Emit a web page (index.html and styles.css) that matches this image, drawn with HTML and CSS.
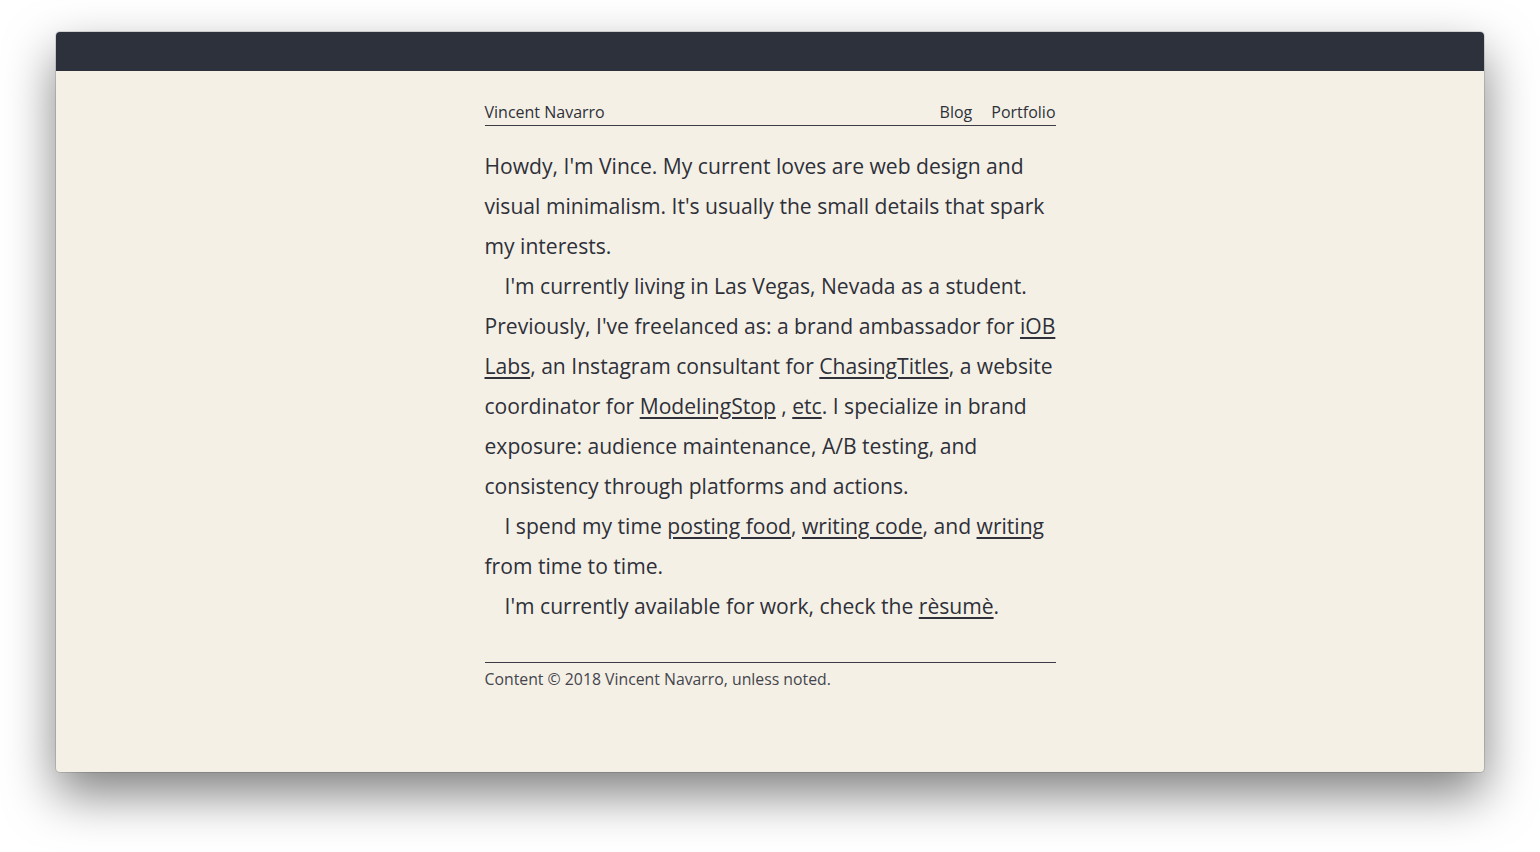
FILE: index.html
```html
<!DOCTYPE html>
<html>
<head>
<meta charset="utf-8">
<link rel="stylesheet" href="styles.css">
</head>
<body>
<div class="window">
  <div class="titlebar"></div>
  <div class="page">
    <div class="column">
      <header class="site-header">
        <a class="brand" href="#">Vincent Navarro</a>
        <nav class="nav">
          <a href="#">Blog</a>
          <a href="#">Portfolio</a>
        </nav>
      </header>
      <main class="content">
        <p class="lead">Howdy, I'm Vince. My current loves are web design and visual minimalism. It's usually the small details that spark my interests.</p>
        <p>I'm currently living in Las Vegas, Nevada as a student. Previously, I've freelanced as: a brand ambassador for <a href="#">iOB Labs</a>, an Instagram consultant for <a href="#">ChasingTitles</a>, a website coordinator for <a href="#">ModelingStop</a> , <a href="#">etc</a>. I specialize in brand exposure: audience maintenance, A/B testing, and consistency through platforms and actions.</p>
        <p>I spend my time <a href="#">posting food</a>, <a href="#">writing code</a>, and <a href="#">writing</a> from time to time.</p>
        <p>I'm currently available for work, check the <a href="#">rèsumè</a>.</p>
      </main>
      <footer class="site-footer">Content © 2018 Vincent Navarro, unless noted.</footer>
    </div>
  </div>
</div>
</body>
</html>
```
FILE: styles.css
```css
html, body {
  margin: 0;
  padding: 0;
}
body {
  background: #ffffff;
  height: 852px;
  box-sizing: border-box;
  padding: 32px 56px 80px;
  display: flex;
  flex-direction: column;
  overflow: hidden;
}
.window {
  flex: 1;
  display: flex;
  flex-direction: column;
  border-radius: 4px;
  overflow: hidden;
  background: #f4f0e6;
  box-shadow: 0 22px 50px rgba(0, 0, 0, 0.5), 0 0 0 1px rgba(0, 0, 0, 0.12);
}
.titlebar {
  height: 39px;
  background: #2d313c;
  flex: none;
}
.page {
  flex: 1;
  display: flex;
  justify-content: center;
  padding-top: 32px;
}
.column {
  width: 571px;
  color: #2f3039;
}
.site-header {
  display: flex;
  justify-content: space-between;
  align-items: baseline;
  border-bottom: 1px solid #3b3c45;
  padding-bottom: 3px;
  font-family: "Open Sans", sans-serif;
  font-size: 16px;
  line-height: 19px;
}
.site-header a {
  color: #2f3039;
  text-decoration: none;
}
.nav {
  display: flex;
  gap: 19px;
}
.content {
  padding-top: 20px;
  font-family: "Open Sans", sans-serif;
  font-size: 21.1px;
  font-weight: 500;
  line-height: 40px;
}
.content p {
  margin: 0;
  text-indent: 20px;
}
.content p.lead {
  text-indent: 0;
}
.content a {
  color: #2f3039;
  text-decoration: underline;
  text-decoration-thickness: 1.5px;
  text-underline-offset: 3px;
}
.site-footer {
  margin-top: 36px;
  border-top: 1px solid #3b3c45;
  padding-top: 6px;
  font-family: "Open Sans", sans-serif;
  font-size: 15.8px;
  line-height: 20px;
  color: #44454c;
}
```
